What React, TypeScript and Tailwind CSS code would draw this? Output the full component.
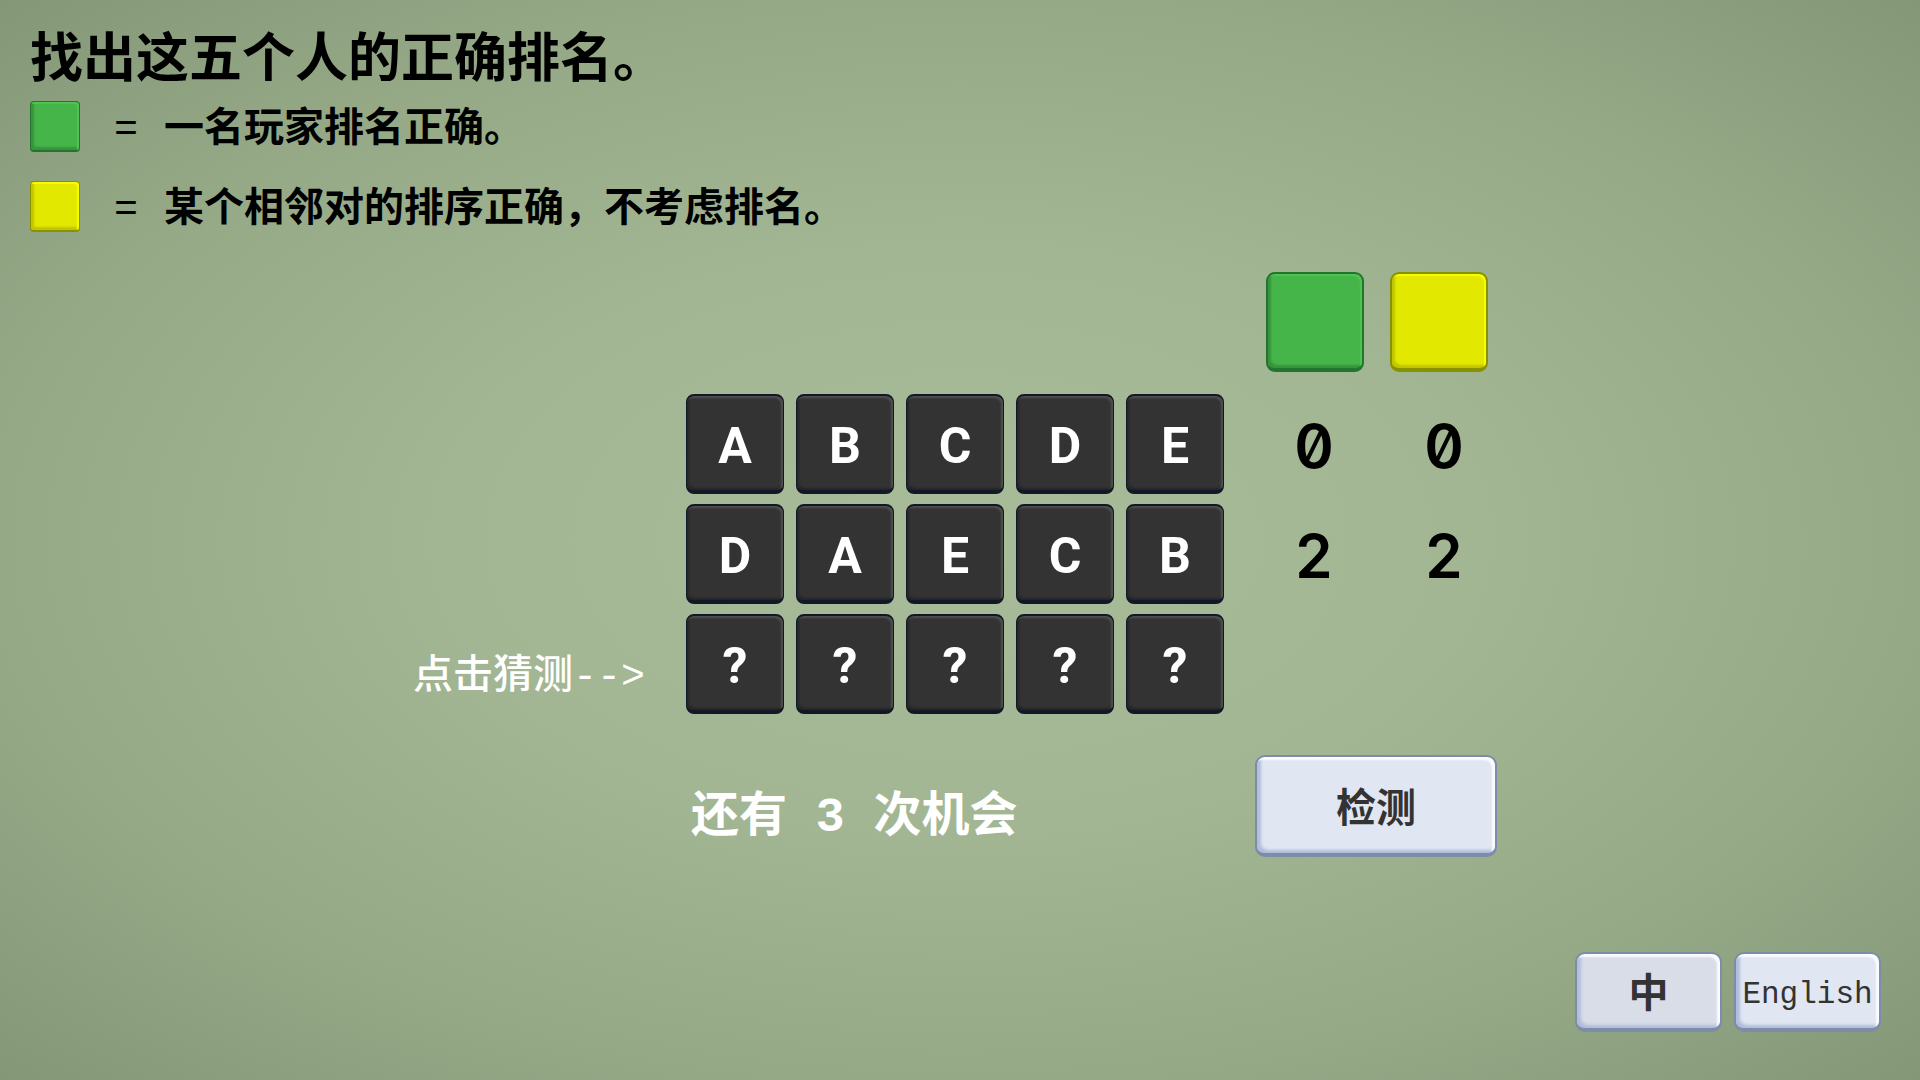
import { useState } from "react";

const CJK = "font-['Liberation_Mono','Noto_Sans_CJK_SC',monospace]";

const GUESSES = [
  { letters: ["A", "B", "C", "D", "E"], green: 0, yellow: 0 },
  { letters: ["D", "A", "E", "C", "B"], green: 2, yellow: 2 },
];

const GREEN =
  "bg-[#46b549] border-[#23752e] shadow-[inset_-2px_2px_1px_#4fc452,inset_3px_-3px_2px_#37943d]";
const YELLOW =
  "bg-[#e3e800] border-[#879200] shadow-[inset_-2px_2px_1px_#f8fd00,inset_3px_-3px_2px_#c0c600]";
const LARGE = "h-[100px] w-[98px] rounded-[9px] border-2 border-b-4";
const SMALL = "h-[51px] w-[50px] shrink-0 rounded-[4px] border border-b-2";
const KEY =
  "rounded-[10px] border-2 border-b-4 border-[#7c8ca9] shadow-[inset_-3px_3px_2px_#fafcff,inset_4px_-3px_3px_#b0bddb] text-[#333333]";

function Tile({ letter, onClick }: { letter: string; onClick?: () => void }) {
  return (
    <button
      type="button"
      onClick={onClick}
      className="flex h-[100px] w-[98px] items-center justify-center rounded-[8px] border border-t-2 border-b-4 border-[#111827] bg-[#333333] pt-[6px] font-['Roboto',sans-serif] text-[50px] leading-none font-bold text-white shadow-[inset_-2px_2px_2px_#505050,inset_2px_-2px_2px_#262626]"
    >
      {letter}
    </button>
  );
}

function Rule({ color, children }: { color: string; children: string }) {
  return (
    <li className="flex h-[52px] items-center">
      <span className={`${SMALL} ${color}`} />
      <span className="ml-[34px] w-[50px] pt-[10px] text-[40px] leading-[52px]">=</span>
      <span className="pt-[10px] text-[40px] leading-[52px] font-bold">{children}</span>
    </li>
  );
}

export default function App() {
  const [guess, setGuess] = useState(["?", "?", "?", "?", "?"]);
  const [chinese, setChinese] = useState(true);

  const cycle = (index: number) =>
    setGuess(guess.map((g, i) => (i === index ? "ABCDE"["ABCDE".indexOf(g) + 1] ?? "A" : g)));

  return (
    <div
      className={`flex min-h-screen flex-col bg-[radial-gradient(ellipse_farthest-corner_at_center,#a8bc9a_0%,#a2b694_38%,#95a987_71%,#849777_100%)] text-black ${CJK}`}
    >
      <header className="px-[30px] pt-[26px]">
        <h1 className="text-[53px] leading-[74px] font-bold">找出这五个人的正确排名。</h1>
        <ul className="flex flex-col gap-[28px]">
          <Rule color={GREEN}>一名玩家排名正确。</Rule>
          <Rule color={YELLOW}>某个相邻对的排序正确，不考虑排名。</Rule>
        </ul>
      </header>

      <main className="mt-[40px] grid grid-cols-[1fr_auto_1fr] pr-[10px]">
        <div className="col-start-3 flex gap-[26px] pl-[42px]">
          <span className={`${LARGE} ${GREEN}`} />
          <span className={`${LARGE} ${YELLOW}`} />
        </div>

        <p className="col-start-1 row-start-2 mt-[22px] flex h-[320px] items-end justify-end pr-[41px] pb-[6px] text-[40px] leading-[60px] font-medium text-white">
          点击猜测--&gt;
        </p>
        <div className="col-start-2 row-start-2 mt-[22px] grid grid-cols-5 gap-x-[12px] gap-y-[10px]">
          {GUESSES.flatMap((row, r) => row.letters.map((l, i) => <Tile key={`${r}${i}`} letter={l} />))}
          {guess.map((l, i) => (
            <Tile key={i} letter={l} onClick={() => cycle(i)} />
          ))}
        </div>
        <div className="col-start-3 row-start-2 mt-[22px] flex flex-col gap-[10px] pl-[41px] font-['Inter',sans-serif] text-[60px] font-semibold [font-feature-settings:'zero']">
          {GUESSES.map((row, r) => (
            <div key={r} className="flex h-[100px] items-center gap-[32px] pt-[4px]">
              <span className="w-[98px] text-center">{row.green}</span>
              <span className="w-[98px] text-center">{row.yellow}</span>
            </div>
          ))}
        </div>

        <p className="col-start-2 row-start-3 mt-[46px] pl-[5px] text-[48px] leading-[116px] font-bold text-white">
          还有 3 次机会
        </p>
        <div className="col-start-3 row-start-3 mt-[41px] pl-[31px]">
          <button
            type="button"
            className={`${KEY} h-[102px] w-[242px] bg-[#e0e6f2] pt-[14px] text-[40px] font-bold`}
          >
            检测
          </button>
        </div>
      </main>

      <footer className="mt-auto flex justify-end gap-[12px] pr-[39px] pb-[48px]">
        <button
          type="button"
          aria-pressed={chinese}
          onClick={() => setChinese(true)}
          className={`${KEY} h-[80px] w-[147px] bg-[#d8dde8] pt-[12px] text-[40px] font-bold`}
        >
          中
        </button>
        <button
          type="button"
          aria-pressed={!chinese}
          onClick={() => setChinese(false)}
          className={`${KEY} flex h-[80px] w-[147px] items-center justify-center bg-[#e0e6f2] pt-[8px] text-[31px]`}
        >
          English
        </button>
      </footer>
    </div>
  );
}
